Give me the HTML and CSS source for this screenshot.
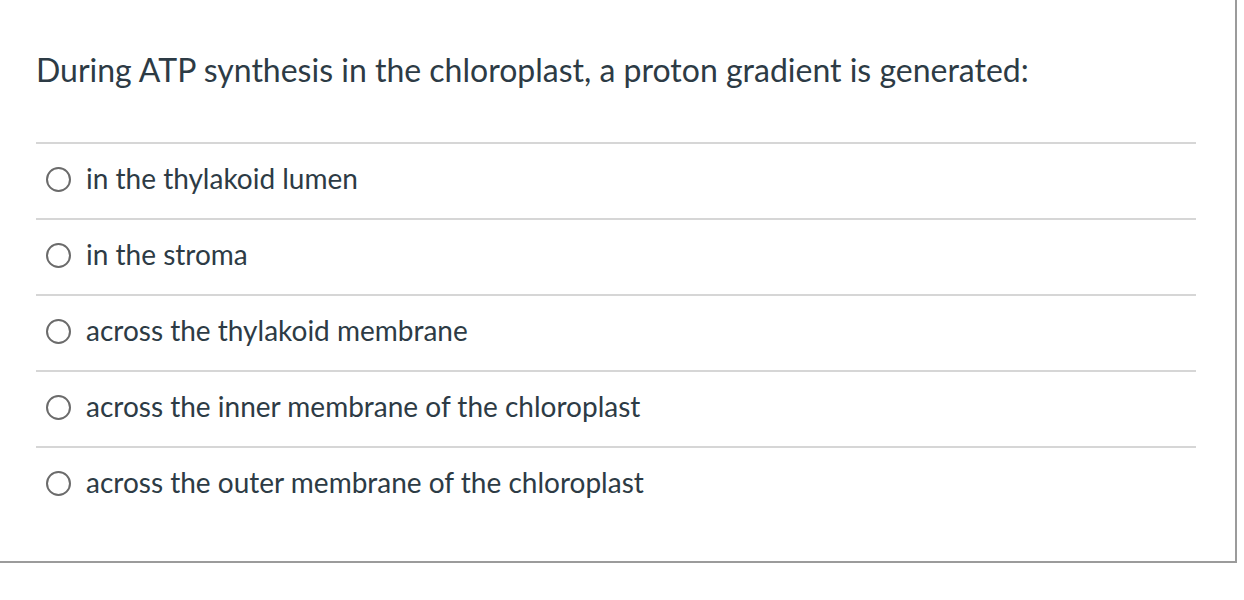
FILE: index.html
```html
<!DOCTYPE html>
<html lang="en">
<head>
<meta charset="utf-8">
<title>Question</title>
<link rel="stylesheet" href="styles.css">
</head>
<body>
<div class="card">
  <div class="question">During ATP synthesis in the chloroplast, a proton gradient is generated:</div>
  <div class="answers">
    <label class="answer"><span class="radio"></span><span class="answer-text">in the thylakoid lumen</span></label>
    <label class="answer"><span class="radio"></span><span class="answer-text">in the stroma</span></label>
    <label class="answer"><span class="radio"></span><span class="answer-text">across the thylakoid membrane</span></label>
    <label class="answer"><span class="radio"></span><span class="answer-text">across the inner membrane of the chloroplast</span></label>
    <label class="answer"><span class="radio"></span><span class="answer-text">across the outer membrane of the chloroplast</span></label>
  </div>
</div>
</body>
</html>
```

FILE: styles.css
```css
html, body {
  margin: 0;
  padding: 0;
  background: #ffffff;
}
body {
  font-family: Lato, "Noto Sans", sans-serif;
  color: #2d3b45;
}
.card {
  width: 1235px;
  height: 510px;
  padding-top: 51px;
  border-right: 2px solid #9b9b9b;
  border-bottom: 2px solid #9b9b9b;
  box-sizing: content-box;
}
.question {
  margin-left: 36px;
  font-size: 32px;
  line-height: 38px;
}
.answers {
  margin: 53px 39px 0 36px;
}
.answer {
  display: flex;
  align-items: center;
  height: 67px;
  padding-bottom: 7px;
  border-top: 2px solid #d6d6d6;
}
.radio {
  width: 21px;
  height: 21px;
  margin-top: 3px;
  margin-left: 10px;
  margin-right: 15px;
  border: 2px solid #6b6b6b;
  border-radius: 50%;
  flex: none;
}
.answer-text {
  font-size: 28px;
  line-height: 32px;
}
```
